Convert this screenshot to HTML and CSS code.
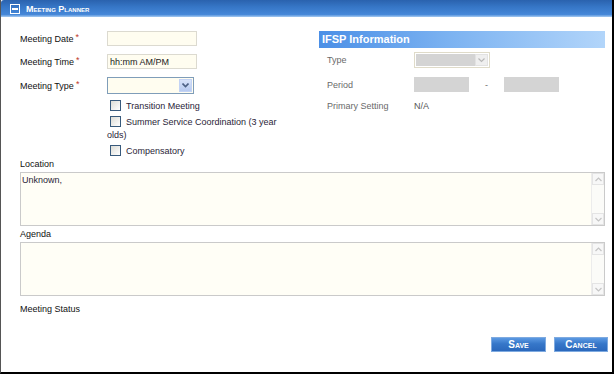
FILE: index.html
```html
<!DOCTYPE html>
<html lang="en">
<head>
    <meta charset="UTF-8">
    <meta name="viewport" content="width=device-width, initial-scale=1.0">
    <title>Meeting Planner</title>
    <link rel="stylesheet" href="styles.css">
</head>
<body>
    <div class="planner">
        <div class="planner-head">
            <span class="collapse-box"></span>
            <span class="planner-title">Meeting Planner</span>
        </div>
        <div class="planner-body">
            <div class="top">
                <div class="meeting-col">
                    <div class="field-row">
                        <label class="field-label">Meeting Date<span class="req">*</span></label>
                        <input class="txt" type="text">
                    </div>
                    <div class="field-row">
                        <label class="field-label">Meeting Time<span class="req">*</span></label>
                        <input class="txt" type="text" value="hh:mm AM/PM">
                    </div>
                    <div class="field-row">
                        <label class="field-label">Meeting Type<span class="req">*</span></label>
                        <div class="select">
                            <span class="select-btn">
                                <svg width="7" height="5" viewBox="0 0 7 5"><path d="M0.5 0.5 L3.5 3.5 L6.5 0.5" fill="none" stroke="#4d6185" stroke-width="1.6"/></svg>
                            </span>
                        </div>
                    </div>
                    <div class="options">
                        <div class="option"><input type="checkbox" class="chk">Transition Meeting</div>
                        <div class="option"><input type="checkbox" class="chk">Summer Service Coordination (3 year olds)</div>
                        <div class="option"><input type="checkbox" class="chk">Compensatory</div>
                    </div>
                </div>
                <div class="ifsp-col">
                    <div class="ifsp-bar">IFSP Information</div>
                    <div class="ifsp-row row-type">
                        <span class="ifsp-label">Type</span>
                        <div class="select disabled">
                            <span class="select-btn">
                                <svg width="7" height="5" viewBox="0 0 7 5"><path d="M0.5 0.5 L3.5 3.5 L6.5 0.5" fill="none" stroke="#b8b8b8" stroke-width="1.2"/></svg>
                            </span>
                        </div>
                    </div>
                    <div class="ifsp-row row-period">
                        <span class="ifsp-label">Period</span>
                        <span class="grey-box"></span>
                        <span class="dash">-</span>
                        <span class="grey-box"></span>
                    </div>
                    <div class="ifsp-row row-setting">
                        <span class="ifsp-label">Primary Setting</span>
                        <span class="ifsp-value">N/A</span>
                    </div>
                </div>
            </div>

            <div class="block-label">Location</div>
            <div class="textbox">
                <textarea>Unknown,</textarea>
                <div class="scroll">
                    <span class="sb-btn"><svg width="7" height="5" viewBox="0 0 7 5"><path d="M0.5 4 L3.5 1 L6.5 4" fill="none" stroke="#c4c4c4" stroke-width="1.2"/></svg></span>
                    <span class="sb-btn"><svg width="7" height="5" viewBox="0 0 7 5"><path d="M0.5 1 L3.5 4 L6.5 1" fill="none" stroke="#c4c4c4" stroke-width="1.2"/></svg></span>
                </div>
            </div>

            <div class="block-label agenda">Agenda</div>
            <div class="textbox">
                <textarea></textarea>
                <div class="scroll">
                    <span class="sb-btn"><svg width="7" height="5" viewBox="0 0 7 5"><path d="M0.5 4 L3.5 1 L6.5 4" fill="none" stroke="#c4c4c4" stroke-width="1.2"/></svg></span>
                    <span class="sb-btn"><svg width="7" height="5" viewBox="0 0 7 5"><path d="M0.5 1 L3.5 4 L6.5 1" fill="none" stroke="#c4c4c4" stroke-width="1.2"/></svg></span>
                </div>
            </div>

            <div class="block-label status">Meeting Status</div>

            <div class="actions">
                <button class="btn save">Save</button>
                <button class="btn cancel">Cancel</button>
            </div>
        </div>
    </div>
</body>
</html>
```

FILE: styles.css
```css
* {
    box-sizing: border-box;
}
body {
    margin: 0;
    font-family: "Liberation Sans", Arial, sans-serif;
    font-size: 9px;
    color: #222;
}
.planner {
    width: 614px;
    height: 374px;
    border-left: 1px solid #555;
    border-right: 2px solid #000;
    border-bottom: 2px solid #000;
    background: #fff;
}
.planner-head {
    height: 17px;
    display: flex;
    align-items: center;
    padding-left: 9px;
    background: linear-gradient(#2a62ae, #3676c6 40%, #4587d8 85%, #a6cbf2);
    border-radius: 3px 0 0 0;
}
.collapse-box {
    width: 10px;
    height: 10px;
    border: 1px solid #fff;
    position: relative;
    margin-right: 6px;
}
.collapse-box::after {
    content: "";
    position: absolute;
    left: 1px;
    right: 1px;
    top: 3px;
    height: 2px;
    background: #fff;
}
.planner-title {
    color: #fff;
    font-weight: bold;
    font-size: 9px;
    font-variant: small-caps;
}
.planner-body {
    padding: 14px 7px 0 19px;
}
.top {
    display: flex;
    column-gap: 29px;
}
.meeting-col {
    width: 270px;
}
.field-row {
    display: flex;
    align-items: center;
    height: 15px;
    margin-bottom: 8px;
}
.field-row:nth-child(3) {
    height: 17px;
    margin-bottom: 0;
}
.field-label {
    width: 87px;
    color: #111;
}
.req {
    color: #c0392b;
    position: relative;
    top: -2px;
    margin-left: 2px;
}
.txt {
    width: 90px;
    height: 15px;
    border: 1px solid #dcdad0;
    background: #fffdf0;
    font-family: inherit;
    font-size: 9px;
    color: #222;
    padding: 0 2px;
}
.select {
    width: 87px;
    height: 17px;
    border: 1px solid #7f9db9;
    background: #fffdf0;
    display: flex;
    justify-content: flex-end;
    padding: 1px;
}
.select-btn {
    width: 13px;
    display: flex;
    align-items: center;
    justify-content: center;
    background: linear-gradient(#d8e3fa, #b7caf0);
    border: 1px solid #c3d3f5;
}
.select.disabled {
    width: 76px;
    height: 16px;
    border-color: #dfdbc9;
    background: #d4d4d4;
    box-shadow: inset 0 0 0 1px #fff;
}
.select.disabled .select-btn {
    background: #efefef;
    border-color: #e2e2e2;
}
.options {
    margin-left: 87px;
    margin-top: 6px;
    width: 183px;
    line-height: 13px;
    color: #2a2438;
}
.option + .option {
    margin-top: 3px;
}
.chk {
    appearance: none;
    width: 11px;
    height: 11px;
    margin: 0 5px 0 3px;
    border: 1px solid #385a7c;
    background: linear-gradient(135deg, #dcdcd6, #fff);
    vertical-align: -2px;
}
.ifsp-col {
    flex: 1;
}
.ifsp-bar {
    height: 17px;
    line-height: 17px;
    padding-left: 3px;
    color: #fff;
    font-weight: bold;
    font-size: 11px;
    background: linear-gradient(to right, #4b8fe6, #7bb2f1 45%, #b2d5fa);
}
.ifsp-row {
    display: flex;
    align-items: center;
    padding-left: 8px;
    color: #6a6a6a;
}
.row-type {
    margin-top: 4px;
    height: 16px;
}
.row-period {
    margin-top: 9px;
    height: 15px;
}
.row-setting {
    margin-top: 7px;
    height: 14px;
}
.ifsp-label {
    width: 87px;
}
.grey-box {
    width: 55px;
    height: 15px;
    background: #d4d4d4;
}
.dash {
    width: 35px;
    text-align: center;
}
.ifsp-value {
    color: #555;
}
.block-label {
    line-height: 12px;
    color: #111;
}
.block-label.agenda {
    margin-top: 2px;
}
.block-label.status {
    margin-top: 7px;
}
.textbox {
    display: flex;
    height: 54px;
    margin-top: 2px;
    border: 1px solid #cacaca;
    background: #fffef6;
}
.textbox textarea {
    flex: 1;
    border: none;
    background: transparent;
    resize: none;
    overflow: hidden;
    font-family: inherit;
    font-size: 9px;
    color: #2a2438;
    padding: 2px 1px;
    outline: none;
}
.scroll {
    width: 13px;
    display: flex;
    flex-direction: column;
    justify-content: space-between;
    border-left: 1px solid #ececec;
    background: #fbfbf8;
}
.sb-btn {
    height: 12px;
    display: flex;
    align-items: center;
    justify-content: center;
    border: 1px solid #e4e4e4;
    background: #f7f7f7;
}
.actions {
    display: flex;
    justify-content: flex-end;
    column-gap: 8px;
    margin-top: 22px;
    margin-right: -3px;
}
.btn {
    height: 15px;
    padding: 0;
    border: 1px solid #7eaae0;
    background: linear-gradient(#5b99e2, #3677c9 45%, #2b68bc);
    color: #fff;
    font-family: inherit;
    font-weight: bold;
    font-size: 10px;
    font-variant: small-caps;
}
.btn.save {
    width: 55px;
}
.btn.cancel {
    width: 54px;
}
```
